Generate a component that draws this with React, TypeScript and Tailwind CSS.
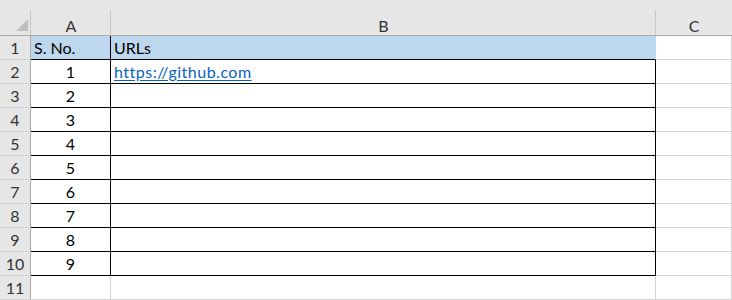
import React from 'react';

const GRID = '#d4d4d4';
const HEAD_LINE = '#ababab';

type Cell = { text?: string; kind?: 'num' | 'text' | 'link'; fill?: string; right?: string; bottom?: string };

// S. No. / URLs sheet, rows 1..11
const rows: Cell[][] = [
  [
    { text: 'S. No.', kind: 'text', fill: '#bdd7ee', right: '#000', bottom: '#000' },
    { text: 'URLs', kind: 'text', fill: '#bdd7ee', right: '#bdd7ee', bottom: '#000' },
    {},
  ],
  [
    { text: '1', kind: 'num', right: '#000', bottom: '#000' },
    { text: 'https://github.com', kind: 'link', right: '#000', bottom: '#000' },
    {},
  ],
  ...Array.from({ length: 8 }, (_, i) => [
    { text: String(i + 2), kind: 'num' as const, right: '#000', bottom: '#000' },
    { right: '#000', bottom: '#000' },
    {},
  ]),
  [{}, {}, {}],
];

function ColHead({ label, last }: { label: string; last?: boolean }) {
  return (
    <div className="relative flex items-center justify-center bg-[#e6e6e6] border-b border-[#ababab] pt-[16px] text-[16px] leading-none text-[#333]">
      {label}
      {!last && <span className="absolute right-0 top-[10px] bottom-0 w-px bg-[#c6c6c6]" />}
    </div>
  );
}

export default function App() {
  return (
    <div className="w-[732px] h-[300px] overflow-hidden bg-white font-['Lato','Liberation_Sans',sans-serif]">
      <div className="grid grid-cols-[31px_80px_545px_76px] grid-rows-[36px_repeat(11,24px)]">
        {/* corner */}
        <div className="relative bg-[#e6e6e6] border-b" style={{ borderColor: HEAD_LINE }}>
          <span className="absolute right-0 top-[10px] bottom-0 w-px bg-[#c6c6c6]" />
          <div className="absolute right-[3px] bottom-[4px] w-0 h-0 border-l-[12px] border-l-transparent border-b-[12px] border-b-[#bfbfbf]" />
        </div>
        <ColHead label="A" />
        <ColHead label="B" />
        <ColHead label="C" last />

        {rows.map((row, r) => (
          <React.Fragment key={r}>
            <div className="flex items-center justify-center bg-[#e6e6e6] border-r border-b border-r-[#ababab] border-b-[#d0d0d0] text-[16px] text-[#333] leading-none">
              {r + 1}
            </div>
            {row.map((c, j) => (
              <div
                key={j}
                className={
                  'flex items-center px-[3px] text-[16px] leading-none text-black ' +
                  (c.kind === 'num' ? 'justify-center' : 'justify-start')
                }
                style={{
                  background: c.fill ?? '#fff',
                  borderRight: `1px solid ${c.right ?? GRID}`,
                  borderBottom: `1px solid ${c.bottom ?? GRID}`,
                }}
              >
                {c.kind === 'link' ? (
                  <span className="text-[#0563c1] underline underline-offset-2 tracking-[0.5px]">{c.text}</span>
                ) : (
                  c.text
                )}
              </div>
            ))}
          </React.Fragment>
        ))}
      </div>
    </div>
  );
}
